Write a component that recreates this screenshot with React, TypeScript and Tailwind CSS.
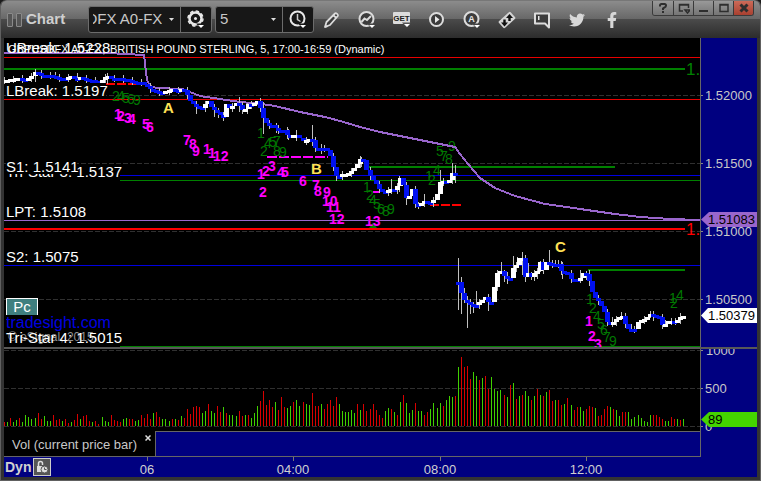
import { useLayoutEffect, useRef } from 'react';
import type { ReactNode } from 'react';
import { FaFacebookF, FaTwitter } from 'react-icons/fa';

// One entry per 5 minute bar: colour letter + volume bar height
const VOLUME = `
r4 g4 r8 g4 g6 r8 g4 g11 g9 g7 g8 r13 r7 g10 g5 g5 r11 r6 r7 g5 r7 r3 g4 r6 r12 g7 r10 r11 r5 g4 r5 r2
g9 g5 g4 r11 r6 r5 r4 g7 g8 r7 r7 g5 g6 r11 r8 r12 r7 g13 r14 r9 g7 g7
g5 r7 g7 r6 g10 r8 r17 r12 r19 r20 r19 g13 g15 r22 g15 g13 r20 r14 g19 r13 g11 g11
g10 r15 r10 g11 r11 g8 g13 g20 r25 r35 r21 r26 r19 g24 r16 r29 r19 g18 g20 r24 g26 g20
r24 g22 g21 r33 r20 r20 g22 r17 r22 r26 r20 r29 g22 g15 g14 g14 g16 g13 r22 g16 r22 r15
r17 r22 r16 r11 r8 g15 g18 r17 g14 r11 g24 r31 g23 g13 g16 r23 g15 g15 r11 r14 g17
g23 g18 g23 r20 g26 g30 g29 r30 g59 r69 r59 r60 r47 g54 g50 r46 g48 r50 r37 g49 g37 g35
g36 r31 g29 r41 g43 r27 g30 r31 g35 g30 r26 g30 r37 g31 r30 g34 r36 r25 g26 r26 r21 g22
r28 g21 r16 r19 g19 g15 r17 r20 r19 g18 r10 r11 r17 r20 g19 r17 g16 g10 r14 r14 g14 g7
g9 g11 g8 g5 g4 g11 r11 r11 r9 r7 g5 g5 r9 r7 g7 r6 g7`
  .trim()
  .split(/\s+/);

type Point = [number, number];

const CLOSES: Point[] = [
  [4, 80], [12, 79], [18, 78], [24, 79], [30, 77], [34, 72], [38, 73], [42, 75], [48, 75], [54, 76],
  [60, 78], [66, 78], [70, 76], [75, 78], [80, 77], [85, 79], [92, 80], [98, 82], [101, 82], [104, 77],
  [107, 76], [112, 78], [118, 78], [124, 79], [130, 80], [136, 82], [142, 82], [147, 86], [150, 89],
  [156, 91], [162, 92], [166, 90], [172, 89], [178, 90], [183, 89], [186, 91], [188, 98], [192, 103],
  [197, 107], [202, 108], [205, 104], [208, 101], [212, 109], [216, 111], [220, 115], [223, 117],
  [225, 103], [229, 108], [233, 105], [238, 102], [241, 110], [244, 111], [247, 104], [252, 105],
  [256, 100], [259, 103], [261, 113], [264, 120], [267, 125], [271, 124], [275, 128], [279, 130],
  [284, 130], [288, 136], [296, 135], [304, 142], [308, 138], [312, 140], [315, 148], [318, 148],
  [324, 148], [328, 150], [330, 156], [332, 165], [335, 172], [337, 179], [340, 174], [346, 174],
  [350, 172], [354, 168], [358, 163], [360, 159], [363, 160], [365, 168], [369, 175], [373, 180],
  [376, 184], [380, 190], [385, 192], [390, 189], [396, 190], [399, 178], [402, 178], [405, 199],
  [409, 196], [412, 189], [415, 204], [418, 205], [424, 201], [428, 202], [431, 204], [434, 198],
  [438, 192], [441, 177], [444, 183], [447, 183], [450, 178], [453, 170], [456, 179],
  [459, 282], [462, 298], [465, 301], [468, 303], [472, 305], [475, 306], [478, 303], [482, 300],
  [484, 294], [487, 302], [491, 302], [493, 298], [495, 275], [498, 272], [502, 270], [505, 279],
  [509, 277], [511, 279], [514, 263], [517, 266], [519, 258], [522, 258], [524, 279], [527, 272],
  [531, 277], [535, 272], [538, 271], [540, 262], [543, 270], [546, 262], [551, 264], [558, 264],
  [562, 273], [566, 270], [569, 279], [576, 279], [579, 280], [582, 273], [586, 274], [590, 283],
  [593, 297], [596, 298], [600, 304], [604, 312], [607, 322], [612, 323], [616, 319], [619, 317],
  [623, 316], [626, 328], [630, 329], [634, 329], [637, 323], [641, 320], [645, 319], [650, 314],
  [654, 315], [659, 317], [662, 325], [666, 324], [669, 319], [673, 322], [677, 320], [680, 317],
  [685, 316],
];

// x, high, low of the longer wicks
const WICKS = [
  [35, 69, 82], [55, 72, 79], [77, 73, 82], [107, 73, 84], [196, 104, 114], [214, 107, 117],
  [218, 108, 118], [239, 97, 112], [247, 103, 114], [260, 99, 110], [263, 102, 134], [276, 123, 133],
  [288, 129, 140], [296, 130, 141], [312, 125, 146], [321, 144, 154], [336, 170, 181], [361, 157, 167],
  [391, 179, 194], [399, 176, 192], [406, 192, 205], [418, 202, 209], [424, 194, 203], [440, 170, 188],
  [452, 163, 182], [455, 165, 183], [458, 258, 310], [461, 277, 314], [464, 288, 303], [467, 296, 328],
  [470, 300, 314], [473, 302, 313], [476, 291, 308], [488, 298, 311], [501, 262, 274], [504, 270, 282],
  [507, 272, 284], [513, 256, 277], [517, 257, 268], [522, 252, 275], [525, 270, 282], [528, 263, 276],
  [531, 272, 280], [537, 268, 279], [540, 261, 272], [549, 250, 265], [555, 260, 266], [558, 260, 268],
  [562, 262, 279], [571, 274, 282], [580, 270, 282], [586, 271, 280], [589, 270, 286], [612, 317, 327],
  [621, 312, 320], [631, 324, 331], [650, 311, 318], [653, 312, 321], [665, 320, 327], [675, 318, 325],
  [680, 313, 320],
];

const AVERAGE =
  'M4 53H108L144 55L147 80L150 86L157 88L183 89L190 92L200 96L220 99L240 102L262 104L275 106L300 112L325 117L340 121L360 127L380 132L400 136L430 142L455 147L460 154L468 164L480 178L495 188L515 196L545 204L560 206L580 209L615 214L640 217L670 219L700 220';

// text, x, baseline
type Mark = [string, number, number];

const GREEN_MARKS: Mark[] = [
  ['2', 112, 101], ['4', 117, 101], ['5', 122, 103], ['6', 127, 104], ['9', 133, 105],
  ['1', 257, 138], ['2', 260, 156], ['4', 264, 148], ['5', 269, 147], ['7', 273, 146], ['9', 279, 157], ['8', 273, 156],
  ['1', 363, 192], ['2', 366, 200], ['4', 369, 205], ['5', 373, 209], ['6', 377, 214], ['8', 382, 216], ['9', 387, 214],
  ['1', 425, 181], ['2', 428, 185], ['4', 433, 175], ['5', 436, 156], ['7', 440, 161], ['8', 445, 164], ['9', 448, 151],
  ['1', 586, 304], ['2', 589, 313], ['4', 593, 321], ['5', 597, 329], ['6', 600, 335], ['7', 603, 342], ['9', 609, 346],
  ['1', 669, 303], ['2', 670, 308], ['4', 676, 300],
];

const MAGENTA_MARKS: Mark[] = [
  ['1', 114, 119], ['2', 117, 121], ['3', 124, 123], ['4', 128, 124], ['5', 142, 129], ['6', 146, 132],
  ['7', 183, 145], ['8', 189, 149], ['9', 192, 156], ['1', 203, 154], ['1', 208, 158], ['12', 213, 161],
  ['1', 257, 179], ['2', 262, 176], ['3', 268, 171], ['4', 277, 177], ['5', 281, 177], ['2', 259, 197],
  ['6', 299, 186], ['7', 312, 190], ['8', 314, 196], ['9', 323, 197], ['10', 322, 206], ['11', 326, 212],
  ['12', 329, 224], ['13', 365, 226], ['1', 585, 326], ['2', 588, 341], ['3', 594, 349],
];

const barX = (i: number) => 4 + 3 * i + Math.floor((i + 12) / 22);

function closeAt(x: number) {
  const next = CLOSES.findIndex(([px]) => px >= x);
  if (next < 1) return next === 0 ? CLOSES[0][1] : CLOSES[CLOSES.length - 1][1];
  const [x0, y0] = CLOSES[next - 1];
  const [x1, y1] = CLOSES[next];
  return Math.round(y0 + ((y1 - y0) * (x - x0)) / (x1 - x0));
}

function Candles() {
  let prev = CLOSES[0][1];
  let falling = false;
  return (
    <g shapeRendering="crispEdges">
      {WICKS.map(([x, high, low]) => (
        <rect key={x} x={x} y={high} width="1" height={low - high} fill="#c0c0c0" />
      ))}
      {VOLUME.map((_, i) => {
        const x = barX(i);
        const close = x >= 457 && x < 459 ? 282 : closeAt(x);
        // no body across the overnight gap
        const open = Math.abs(close - prev) > 40 ? close : prev;
        prev = close;
        if (close !== open) falling = close > open;
        return (
          <g key={i}>
            {i % 3 === 0 && (
              <rect x={x} y={Math.min(open, close) - 3} width="1" height={Math.abs(close - open) + 7} fill="#c0c0c0" />
            )}
            <rect
              x={x - 2}
              y={Math.min(open, close)}
              width={5}
              height={Math.max(3, Math.abs(close - open))}
              fill={falling ? '#0010f0' : '#ffffff'}
            />
          </g>
        );
      })}
    </g>
  );
}

function Marks({ items, className }: { items: Mark[]; className: string }) {
  return (
    <g className={className}>
      {items.map(([text, x, y], i) => (
        <text key={i} x={x} y={y}>{text}</text>
      ))}
    </g>
  );
}

function PricePlot() {
  return (
    <svg viewBox="4 38 696 309" preserveAspectRatio="xMinYMin slice" className="absolute inset-0 h-full w-full">
      <g shapeRendering="crispEdges">
        {[95, 163, 231, 299].map((y) => (
          <path key={y} d={`M4 ${y + 0.5}H700`} stroke="#303030" strokeDasharray="5 2" />
        ))}
        <rect x="4" y="57" width="696" height="1" fill="#e80000" />
        <rect x="4" y="68" width="681" height="2" fill="#008000" />
        <rect x="4" y="99" width="696" height="1" fill="#e80000" />
        <rect x="120" y="175" width="580" height="1" fill="#0000e0" />
        <rect x="120" y="180" width="580" height="1" fill="#008000" />
        <rect x="4" y="220" width="696" height="1" fill="#9966cc" />
        <rect x="4" y="228" width="681" height="2" fill="#ff0000" />
        <rect x="4" y="265" width="696" height="1" fill="#0000e0" />
        <rect x="120" y="346" width="580" height="1" fill="#008000" />
        <rect x="366" y="166" width="249" height="2" fill="#008000" />
        <rect x="588" y="269" width="97" height="2" fill="#008000" />
        <path d="M106 84H144M430 205H462" stroke="#ff0000" strokeWidth="2" strokeDasharray="9 2" />
        <path d="M267 157H328M373 192H379" stroke="#ff00ff" strokeWidth="2" strokeDasharray="10 2" />
      </g>

      <Marks items={GREEN_MARKS} className="fill-[#007800] text-[14px]" />
      <path d={AVERAGE} fill="none" stroke="#9966cc" strokeWidth="2" shapeRendering="crispEdges" />
      <Candles />
      <path d="M369 228l4 -5l4 5z" fill="#008000" />
      <Marks items={MAGENTA_MARKS} className="fill-[#ff00ff] text-[14px] font-bold" />
      <Marks items={[['A', 163, 113], ['B', 311, 174], ['C', 555, 252]]} className="fill-[#ffe155] text-[15px] font-bold" />

      <text x="686" y="75" className="fill-[#008000] text-[17px]">1.</text>
      <text x="686" y="235" className="fill-[#ff0000] text-[17px]">1.</text>

      <g className="fill-white text-[15px]">
        <rect x="6" y="83" width="100" height="15" fill="#000" />
        <text x="6" y="53">UBreak: 1.5228</text>
        <text x="6" y="96">LBreak: 1.5197</text>
        <text x="6" y="177">Tri-Star 3: 1.5137</text>
        <rect x="6" y="159" width="71" height="15" fill="#000" />
        <text x="6" y="172">S1: 1.5141</text>
        <text x="6" y="217">LPT: 1.5108</text>
        <text x="6" y="262">S2: 1.5075</text>
      </g>
      <text x="8" y="53" className="fill-white text-[11px]">GBPUSDFX A0-FX,</text>
      <text x="110" y="53" className="fill-white text-[11px]">BRITISH POUND STERLING, 5, 17:00-16:59 (Dynamic)</text>
      <text x="8" y="341" className="fill-[#909090] text-[12px]">© eSignal, 2015</text>
      <text x="6" y="343" className="fill-white text-[15px]">Tri-Star 4: 1.5015</text>
    </svg>
  );
}

function PriceAxis() {
  return (
    <svg viewBox="700 38 57 309" preserveAspectRatio="xMinYMin slice" className="absolute inset-0 h-full w-full text-[13px]">
      <rect x="700" y="38" width="1" height="309" fill="#666" />
      {([['1.52000', 95], ['1.51500', 163], ['1.51000', 231], ['1.50500', 299]] as [string, number][]).map(([label, y]) => (
        <g key={label}>
          <rect x="701" y={y} width="2" height="1" fill="#888" />
          <text x="705" y={y + 5} fill="#c8c8c8">{label}</text>
        </g>
      ))}
      <path d="M701 219.5L709 212H757V227H709z" fill="#9966cc" />
      <text x="708" y="224" fill="#000">1.51083</text>
      <path d="M701 315.5L708 308H757V323H708z" fill="#fff" />
      <text x="708" y="320" fill="#000">1.50379</text>
    </svg>
  );
}

function VolumePlot() {
  return (
    <svg
      viewBox="4 349 696 82"
      preserveAspectRatio="xMinYMin slice"
      shapeRendering="crispEdges"
      className="absolute inset-0 h-full w-full"
    >
      {[350, 388, 426].map((y) => (
        <path key={y} d={`M4 ${y + 0.5}H700`} stroke="#303030" strokeDasharray="5 2" />
      ))}
      {VOLUME.map((bar, i) => {
        const height = Number(bar.slice(1));
        return (
          <rect key={i} x={barX(i)} y={426 - height} width="1" height={height} fill={bar[0] === 'r' ? '#d80000' : '#40d000'} />
        );
      })}
    </svg>
  );
}

function VolumeAxis() {
  return (
    <svg viewBox="700 349 57 82" preserveAspectRatio="xMinYMin slice" className="absolute inset-0 h-full w-full text-[13px]">
      <rect x="700" y="349" width="1" height="82" fill="#666" />
      <path d="M701 350.5h2M701 388.5h2M701 426.5h2" stroke="#888" />
      <g fill="#c8c8c8">
        <text x="706" y="355">1000</text>
        <text x="705" y="393">500</text>
        <text x="705" y="431">0</text>
      </g>
      <path d="M701 419.5L709 412H757V427H709z" fill="#44d400" />
      <text x="708" y="424" fill="#000">89</text>
    </svg>
  );
}

function TimeAxis() {
  return (
    <svg viewBox="55 457 702 20" preserveAspectRatio="xMinYMin slice" className="h-5 min-w-0 flex-1 text-[13px]">
      {([['06', 147], ['04:00', 293], ['08:00', 440], ['12:00', 586]] as [string, number][]).map(([label, x]) => (
        <g key={label}>
          <rect x={x} y="457" width="1" height="4" fill="#777" />
          <text x={x} y="474" textAnchor="middle" fill="#d0d0d0">{label}</text>
        </g>
      ))}
    </svg>
  );
}

const Caret = ({ back }: { back: string }) => (
  <>
    <path d="M9 13.5h9l-4.5 5z" fill={back} />
    <path d="M11 15h6l-3 3z" fill="#fff" />
  </>
);

const GearIcon = () => (
  <svg viewBox="0 0 18 19" className="h-[19px] w-[18px]">
    <circle cx="8.5" cy="8.5" r="6" fill="none" stroke="#e8e8e8" strokeWidth="2.5" />
    <circle cx="8.5" cy="8.5" r="7.5" fill="none" stroke="#e8e8e8" strokeWidth="1.5" strokeDasharray="3.4 2.49" />
    <circle cx="8.5" cy="8.5" r="1.5" fill="#e8e8e8" />
    <Caret back="#171717" />
  </svg>
);

const ClockIcon = () => (
  <svg viewBox="0 0 18 19" className="h-[19px] w-[18px]">
    <circle cx="8.5" cy="8.5" r="7" fill="none" stroke="#e8e8e8" strokeWidth="2" />
    <path d="M8.5 4v5.5l3 2" fill="none" stroke="#ccc" strokeWidth="1.5" />
    <Caret back="#171717" />
  </svg>
);

const PencilIcon = () => (
  <svg viewBox="0 0 18 18" className="size-[18px]" fill="none" stroke="#dcdcdc" strokeWidth="1.8" strokeLinejoin="round">
    <path d="M2 16l1.5-5L12 2.5c1-1 3.7 1.3 2.8 2.5L7 14z" fill="#3c3c3c" />
    <path d="M10.5 4.5l3 2.5M2 16l2.5-.8" />
  </svg>
);

const TrendIcon = () => (
  <svg viewBox="0 0 18 19" className="h-[19px] w-[18px]">
    <circle cx="8.5" cy="9" r="7" fill="#3c3c3c" stroke="#dcdcdc" strokeWidth="2" />
    <path d="M3.5 12l3-3.5l2.5 1.5l4-4" fill="none" stroke="#dcdcdc" strokeWidth="2" />
    <Caret back="#444" />
  </svg>
);

const GetIcon = () => (
  <svg viewBox="0 0 18 17" className="h-[17px] w-[18px]">
    <rect x="0" y="1" width="17" height="12" rx="1" fill="#dcdcdc" />
    <text x="8.5" y="10" textAnchor="middle" className="fill-[#222] text-[8px] font-bold">GET</text>
    <path d="M9 11.5h9l-4.5 5z" fill="#555" />
    <path d="M11 13h6l-3 3z" fill="#fff" />
  </svg>
);

const PlayIcon = () => (
  <svg viewBox="0 0 17 17" className="size-[17px]">
    <circle cx="8.5" cy="8.5" r="6.5" fill="#3c3c3c" stroke="#dcdcdc" strokeWidth="2" />
    <path d="M7 5v7l4.500-3.500z" fill="#e8e8e8" />
  </svg>
);

const AutoIcon = () => (
  <svg viewBox="0 0 18 19" className="h-[19px] w-[18px]">
    <circle cx="8.5" cy="9" r="7" fill="#3c3c3c" stroke="#dcdcdc" strokeWidth="2" />
    <text x="8.5" y="12" textAnchor="middle" className="fill-[#e8e8e8] text-[9px] font-bold">A</text>
    <Caret back="#444" />
  </svg>
);

const SwapIcon = () => (
  <svg viewBox="0 0 18 18" className="size-[18px]">
    <rect x="1" y="4.5" width="16" height="9" rx="1.5" fill="#d4d4d4" transform="rotate(-42 9 9)" />
    <path d="M11.500 3L15 7H12.700V10H10.300V7H8zM6.500 15.500L3 11.500H5.300V8.500H7.700V11.500H10z" fill="#111" />
  </svg>
);

const ChatIcon = () => (
  <svg viewBox="0 0 18 18" className="size-[18px]">
    <path d="M2 2.5h14v14l-4-4H2z" fill="#3c3c3c" stroke="#dcdcdc" strokeWidth="2" strokeLinejoin="round" />
    <rect x="5" y="5" width="1.5" height="4" fill="#e8e8e8" />
  </svg>
);

const TOOLS: { label: string; icon: ReactNode }[] = [
  { label: 'Draw', icon: <PencilIcon /> },
  { label: 'Studies', icon: <TrendIcon /> },
  { label: 'Advanced GET', icon: <GetIcon /> },
  { label: 'Replay', icon: <PlayIcon /> },
  { label: 'Alerts', icon: <AutoIcon /> },
  { label: 'Trade', icon: <SwapIcon /> },
  { label: 'Chat', icon: <ChatIcon /> },
  { label: 'Twitter', icon: <FaTwitter className="size-4 text-[#d8d8d8]" /> },
  { label: 'Facebook', icon: <FaFacebookF className="size-4 text-[#d8d8d8]" /> },
];

const WINDOW_BUTTONS: { label: string; icon: ReactNode }[] = [
  { label: 'Help', icon: <path d="M3 4.500V3.500Q3 2 4.500 2H7.500Q9 2 9 3.500Q9 5 7.500 5.500L6 6.500V8M6 9V11" fill="none" stroke="#2e2e2e" strokeWidth="2" /> },
  { label: 'Dock', icon: <path d="M5 9H1.5V2.5h9V6M1 3h10M7 8h5l-2.5 3z" fill="none" stroke="#2e2e2e" strokeWidth="1.5" /> },
  { label: 'Minimize', icon: <path d="M1 9h9" stroke="#2e2e2e" strokeWidth="2" /> },
  { label: 'Maximize', icon: <path d="M2 2.5h8v7H2zM2 3h8" fill="none" stroke="#2e2e2e" strokeWidth="1.5" /> },
  { label: 'Close', icon: <path d="M2.5 2.5l7 7M9.5 2.5l-7 7" stroke="#2e2e2e" strokeWidth="3" /> },
];

function ComboBox({ label, value, width, icon }: { label: string; value: string; width: string; icon: ReactNode }) {
  const ref = useRef<HTMLInputElement>(null);

  // Long symbols show their end
  useLayoutEffect(() => {
    if (ref.current) ref.current.scrollLeft = ref.current.scrollWidth;
  }, [value]);

  return (
    <div className="flex h-[27px] rounded-[3px] border border-[#6c6c6c] bg-[#171717]">
      <div className={`flex items-center ${width}`}>
        <input
          ref={ref}
          aria-label={label}
          defaultValue={value}
          className="ml-1 min-w-0 flex-1 bg-transparent text-[15px] text-[#c8c8c8] outline-none"
        />
        <button type="button" aria-label={`${label} list`} className="flex w-[18px] justify-center">
          <svg viewBox="0 0 5 3" className="h-[3px] w-[5px]">
            <path d="M0 0h5L2.5 3z" fill="#ddd" />
          </svg>
        </button>
      </div>
      <button type="button" aria-label={`${label} options`} className="flex w-[31px] items-center justify-center border-l border-[#6c6c6c]">
        {icon}
      </button>
    </div>
  );
}

function TitleBar() {
  return (
    <header className="flex h-[38px] shrink-0 items-center rounded-t-md border-t border-[#777] bg-[linear-gradient(to_bottom,#8c8c8c_0%,#686868_48%,#4a4a4a_50%,#2c2c2c_100%)]">
      <div className="flex gap-[3px] pl-1.5">
        <span className="h-3.5 w-1.5 rounded-[1px] border border-[#8a8a8a] bg-[#555]" />
        <span className="h-3.5 w-1.5 rounded-[1px] border border-[#8a8a8a] bg-[#555]" />
      </div>
      <h1 className="ml-1 w-[62px] text-[15px] font-bold text-[#cfcfcf]">Chart</h1>
      <div className="flex gap-[3px]">
        <ComboBox label="Symbol" value="GBPUSDFX A0-FX" width="w-[91px]" icon={<GearIcon />} />
        <ComboBox label="Interval" value="5" width="w-[66px]" icon={<ClockIcon />} />
      </div>
      <nav className="flex">
        {TOOLS.map(({ label, icon }) => (
          <button key={label} type="button" aria-label={label} className="flex w-[35px] items-center justify-center">
            {icon}
          </button>
        ))}
      </nav>
      <div className="mr-1.5 ml-auto flex self-start overflow-hidden rounded-b-[3px] border border-t-0 border-[#3a3a3a]">
        {WINDOW_BUTTONS.map(({ label, icon }) => (
          <button
            key={label}
            type="button"
            aria-label={label}
            className="flex h-3.5 w-5 items-center justify-center border-l border-[#3a3a3a] bg-linear-to-b from-[#999] to-[#757575] first:border-l-0 last:from-[#cc6a58] last:to-[#a84030]"
          >
            <svg viewBox="0 0 12 12" className="size-3">{icon}</svg>
          </button>
        ))}
      </div>
    </header>
  );
}

export default function App() {
  return (
    <div className="h-screen bg-[#1c1c1c] font-['Liberation_Sans',Arial,sans-serif]">
      <div className="flex h-full flex-col overflow-hidden rounded-t-md border-x border-b border-[#606060] bg-[#333]">
        <TitleBar />
        <main className="flex min-h-0 flex-1 flex-col px-[3px] pb-[3px]">
          <section className="flex min-h-0 flex-1" aria-label="Price">
            <div className="relative min-w-0 flex-1 overflow-hidden bg-black">
              <PricePlot />
              <div className="absolute bottom-4 left-0.5 flex flex-col items-start">
                <button type="button" className="h-[17px] w-8 border border-b-0 border-white bg-[#3f7f7f] text-[15px] leading-4 text-white">
                  Pc
                </button>
                <a href="#tradesight" className="h-4 overflow-hidden text-[16px] leading-4 text-[#0000e0]">tradesight.com</a>
              </div>
            </div>
            <div className="relative w-[57px] bg-[#000080]">
              <PriceAxis />
            </div>
          </section>

          <div className="h-0.5 bg-[#585858]" />

          <section className="flex h-[82px]" aria-label="Volume">
            <div className="relative min-w-0 flex-1 overflow-hidden bg-black">
              <VolumePlot />
            </div>
            <div className="relative w-[57px] bg-[#000080]">
              <VolumeAxis />
            </div>
          </section>

          <div className="flex bg-[#000080]">
            <div className="flex h-[26px] flex-1 border-r border-b border-[#666]">
              <div className="flex w-[151px] items-start bg-black pl-2">
                <span className="flex-1 text-[13px] leading-[27px] whitespace-nowrap text-[#c8c8c8]">Vol (current price bar)</span>
                <button type="button" aria-label="Close study" className="flex size-3.5 items-center justify-center">
                  <svg viewBox="0 0 6 6" className="size-1.5">
                    <path d="M.5 .5l5 5M5.5 .5l-5 5" stroke="#ddd" strokeWidth="1.5" />
                  </svg>
                </button>
              </div>
              <div className="flex-1 border-t border-l border-[#666]" />
            </div>
            <div className="w-14" />
          </div>

          <footer className="flex bg-[#000080]">
            <div className="flex w-[51px] items-center gap-0.5 pl-px">
              <span className="text-[14px] leading-5 font-bold text-[#d0d0d0]">Dyn</span>
              <button type="button" aria-label="Lock time template" className="flex size-[18px] items-center justify-center border border-[#ccc] bg-[#555]">
                <svg viewBox="0 0 14 14" className="size-3.5" fill="none" stroke="#ddd">
                  <path d="M3.5 6V3.5a2 2 0 0 1 4 0V5" strokeWidth="1.5" />
                  <rect x="2" y="6" width="6" height="6" fill="#ddd" stroke="none" />
                  <circle cx="9.5" cy="9.5" r="3.5" fill="#ddd" stroke="#555" />
                  <path d="M9.5 7.5v2h2" stroke="#555" />
                </svg>
              </button>
            </div>
            <TimeAxis />
          </footer>
        </main>
      </div>
    </div>
  );
}
